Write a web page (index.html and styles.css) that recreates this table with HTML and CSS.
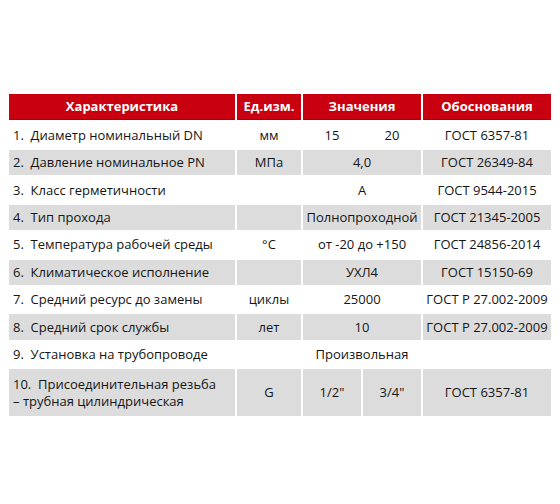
FILE: index.html
```html
<!DOCTYPE html>
<html lang="ru">
<head>
<meta charset="utf-8">
<link rel="stylesheet" href="styles.css">
</head>
<body>
<div class="spec">
  <div class="h c1">Характеристика</div>
  <div class="h">Ед.изм.</div>
  <div class="h span2">Значения</div>
  <div class="h">Обоснования</div>

  <div class="c1">1.&nbsp; Диаметр номинальный DN</div>
  <div>мм</div>
  <div>15</div>
  <div>20</div>
  <div>ГОСТ 6357-81</div>

  <div class="g c1">2.&nbsp; Давление номинальное PN</div>
  <div class="g">МПа</div>
  <div class="g span2">4,0</div>
  <div class="g">ГОСТ 26349-84</div>

  <div class="c1">3.&nbsp; Класс герметичности</div>
  <div></div>
  <div class="span2">А</div>
  <div>ГОСТ 9544-2015</div>

  <div class="g c1">4.&nbsp; Тип прохода</div>
  <div class="g"></div>
  <div class="g span2">Полнопроходной</div>
  <div class="g">ГОСТ 21345-2005</div>

  <div class="c1">5.&nbsp; Температура рабочей среды</div>
  <div>°C</div>
  <div class="span2">от -20 до +150</div>
  <div>ГОСТ 24856-2014</div>

  <div class="g c1">6.&nbsp; Климатическое исполнение</div>
  <div class="g"></div>
  <div class="g span2">УХЛ4</div>
  <div class="g">ГОСТ 15150-69</div>

  <div class="c1">7.&nbsp; Средний ресурс до замены</div>
  <div>циклы</div>
  <div class="span2">25000</div>
  <div>ГОСТ Р 27.002-2009</div>

  <div class="g c1">8.&nbsp; Средний срок службы</div>
  <div class="g">лет</div>
  <div class="g span2">10</div>
  <div class="g">ГОСТ Р 27.002-2009</div>

  <div class="c1">9.&nbsp; Установка на трубопроводе</div>
  <div></div>
  <div class="span2">Произвольная</div>
  <div></div>

  <div class="g c1">10.&nbsp; Присоединительная резьба<br>– трубная цилиндрическая</div>
  <div class="g">G</div>
  <div class="g">1/2"</div>
  <div class="g">3/4"</div>
  <div class="g">ГОСТ 6357-81</div>
</div>
</body>
</html>
```

FILE: styles.css
```css
html, body {
  margin: 0;
  background: #ffffff;
}
body {
  padding: 94px 0 0 9px;
  font-family: "Open Sans", "Noto Sans", sans-serif;
  font-size: 13px;
  color: #151515;
}
.spec {
  display: grid;
  grid-template-columns: 226px 64px 58px 58px 128px;
  grid-template-rows: 26px 26px repeat(8, 25.4px) 47px;
  column-gap: 2px;
  row-gap: 2px;
  width: 542px;
}
.spec > div {
  display: flex;
  align-items: center;
  justify-content: center;
  text-align: center;
  white-space: nowrap;
  line-height: 17px;
}
.spec > .c1 {
  justify-content: flex-start;
  text-align: left;
  padding-left: 4px;
}
.spec > .h {
  background: #c8000f;
  color: #ffffff;
  font-weight: 700;
  justify-content: center;
  padding-left: 0;
  border-bottom: 1px solid #a8000c;
}
.spec > .span2 {
  grid-column: span 2;
}
.spec > .g {
  background: #dcdcdc;
}
```
